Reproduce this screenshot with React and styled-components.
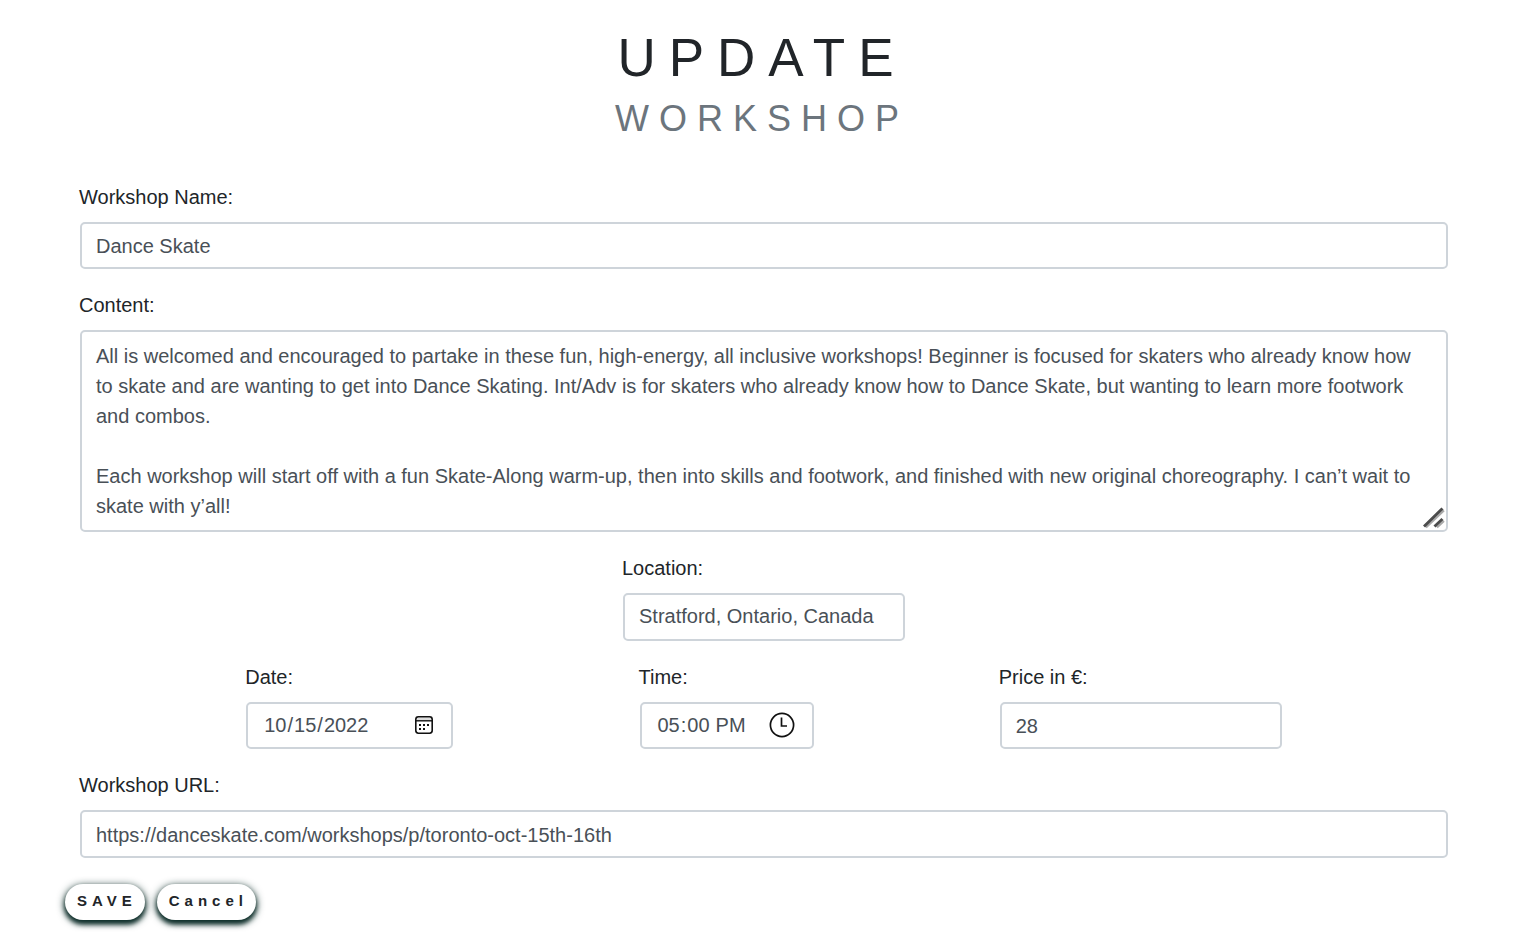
import React from 'react';
import styled, { createGlobalStyle } from 'styled-components';

const GlobalStyle = createGlobalStyle`
  *, *::before, *::after { box-sizing: border-box; }
  body {
    margin: 0;
    background: #fff;
    color: #212529;
    font-family: "Liberation Sans", Arial, sans-serif;
    font-size: 20px;
    line-height: 30px;
  }
`;

const Page = styled.main`
  min-height: 100vh;
  padding: 26px 60px 8px;
`;

const Title = styled.h1`
  margin: 0 0 34px;
  padding-right: 4px;
  font-size: 53px;
  font-weight: 400;
  line-height: 64px;
  letter-spacing: 13px;
  text-align: center;
`;

const Subtitle = styled.small`
  display: block;
  color: #6c757d;
  font-size: 36px;
  line-height: 58px;
  letter-spacing: 10px;
`;

const Form = styled.form`
  display: flex;
  flex-direction: column;
  gap: 21px;
`;

const Field = styled.div`
  display: flex;
  flex-direction: column;
  gap: 10px;
  margin: ${(p) => (p.$wide ? '0 20px' : '0')};
`;

const Row = styled.div`
  display: flex;
  justify-content: space-evenly;
`;

const Label = styled.label`
  margin-left: -1px;
`;

const control = `
  display: block;
  width: 100%;
  border: 2px solid #ced4da;
  border-radius: 5px;
  background: #fff;
  color: #495057;
  font: inherit;
  outline: none;
`;

const Input = styled.input`
  ${control}
  width: ${(p) => p.$width || '100%'};
  height: ${(p) => (p.$tall ? 48 : 47)}px;
  padding: ${(p) => (p.$raised ? '0 14px 2px' : '2px 14px 0')};
`;

const AreaBox = styled.div`
  position: relative;
`;

const TextArea = styled.textarea`
  ${control}
  height: 202px;
  padding: 9px 14px 8px;
  line-height: 30px;
  overflow: hidden;
  resize: vertical;
  &::-webkit-resizer { display: none; }
`;

const Grip = styled.svg`
  position: absolute;
  right: 3px;
  bottom: 3px;
  pointer-events: none;
`;

const PickerBox = styled.div`
  ${control}
  display: flex;
  align-items: center;
  justify-content: space-between;
  width: ${(p) => p.$width};
  height: 47px;
  padding: 0 17px 2px 15px;
`;

const PickerInput = styled.input`
  flex: 1;
  min-width: 0;
  padding: 0;
  border: 0;
  background: transparent;
  color: inherit;
  font: inherit;
  outline: none;
  &::-webkit-calendar-picker-indicator { display: none; }
`;

const Actions = styled.div`
  display: flex;
  gap: 12px;
  padding: 5px;
`;

const Button = styled.button`
  height: 36px;
  padding: 0 8px 2px 12px;
  border: 0;
  border-radius: 18px;
  background: #fff;
  color: #212529;
  font: inherit;
  font-size: 15px;
  font-weight: 700;
  letter-spacing: 5px;
  box-shadow: 0 4px 5px #0f2f2b, 0 2px 8px #0f2f2b;
`;

const CalendarIcon = () => (
  <svg width="20" height="20" viewBox="0 0 20 20" aria-hidden="true">
    <path d="M3 2.5h14v3H3z" fill="#ddd" />
    <rect x="1.8" y="1.8" width="16.4" height="16.4" rx="2.6" fill="none" stroke="#111" strokeWidth="1.6" />
    <path d="M2 5.8h16" stroke="#111" strokeWidth="1.4" />
    <g fill="#111">
      <rect x="5" y="9" width="2" height="2" />
      <rect x="9" y="9" width="2" height="2" />
      <rect x="13" y="9" width="2" height="2" />
      <rect x="5" y="13" width="2" height="2" />
      <rect x="9" y="13" width="2" height="2" />
    </g>
  </svg>
);

const ClockIcon = () => (
  <svg width="26" height="26" viewBox="0 0 26 26" aria-hidden="true" fill="none" stroke="#111">
    <circle cx="13" cy="13" r="11.6" strokeWidth="1.7" />
    <path d="M12.5 5.5v8.5H18" strokeWidth="1.7" />
  </svg>
);

const content = `All is welcomed and encouraged to partake in these fun, high-energy, all inclusive workshops! Beginner is focused for skaters who already know how to skate and are wanting to get into Dance Skating. Int/Adv is for skaters who already know how to Dance Skate, but wanting to learn more footwork and combos.

Each workshop will start off with a fun Skate-Along warm-up, then into skills and footwork, and finished with new original choreography. I can’t wait to skate with y’all!`;

export default function App() {
  return (
    <>
      <GlobalStyle />
      <Page>
        <Title>
          UPDATE
          <Subtitle>WORKSHOP</Subtitle>
        </Title>
        <Form onSubmit={(e) => e.preventDefault()}>
          <Field $wide>
            <Label htmlFor="name">Workshop Name:</Label>
            <Input id="name" type="text" defaultValue="Dance Skate" />
          </Field>
          <Field $wide>
            <Label htmlFor="content">Content:</Label>
            <AreaBox>
              <TextArea id="content" defaultValue={content} />
              <Grip width="22" height="22" viewBox="0 0 22 22" aria-hidden="true">
                <path d="M3 20.5 21 3.5M14 20.5 21 14" stroke="#aaa" strokeWidth="2" />
                <path d="M1 19.5 19.5 1.5M11.5 19.5 19.5 12" stroke="#4c4c4c" strokeWidth="3" />
              </Grip>
            </AreaBox>
          </Field>
          <Row>
            <Field>
              <Label htmlFor="location">Location:</Label>
              <Input id="location" type="text" $width="282px" $tall $raised defaultValue="Stratford, Ontario, Canada" />
            </Field>
          </Row>
          <Row>
            <Field>
              <Label htmlFor="date">Date:</Label>
              <PickerBox $width="207px">
                <PickerInput id="date" type="date" defaultValue="2022-10-15" />
                <CalendarIcon />
              </PickerBox>
            </Field>
            <Field>
              <Label htmlFor="time">Time:</Label>
              <PickerBox $width="174px">
                <PickerInput id="time" type="time" defaultValue="17:00" />
                <ClockIcon />
              </PickerBox>
            </Field>
            <Field>
              <Label htmlFor="price">Price in €:</Label>
              <Input id="price" type="text" inputMode="numeric" $width="282px" defaultValue="28" />
            </Field>
          </Row>
          <Field $wide>
            <Label htmlFor="url">Workshop URL:</Label>
            <Input id="url" type="url" $tall defaultValue="https://danceskate.com/workshops/p/toronto-oct-15th-16th" />
          </Field>
          <Actions>
            <Button type="submit">SAVE</Button>
            <Button type="button">Cancel</Button>
          </Actions>
        </Form>
      </Page>
    </>
  );
}
